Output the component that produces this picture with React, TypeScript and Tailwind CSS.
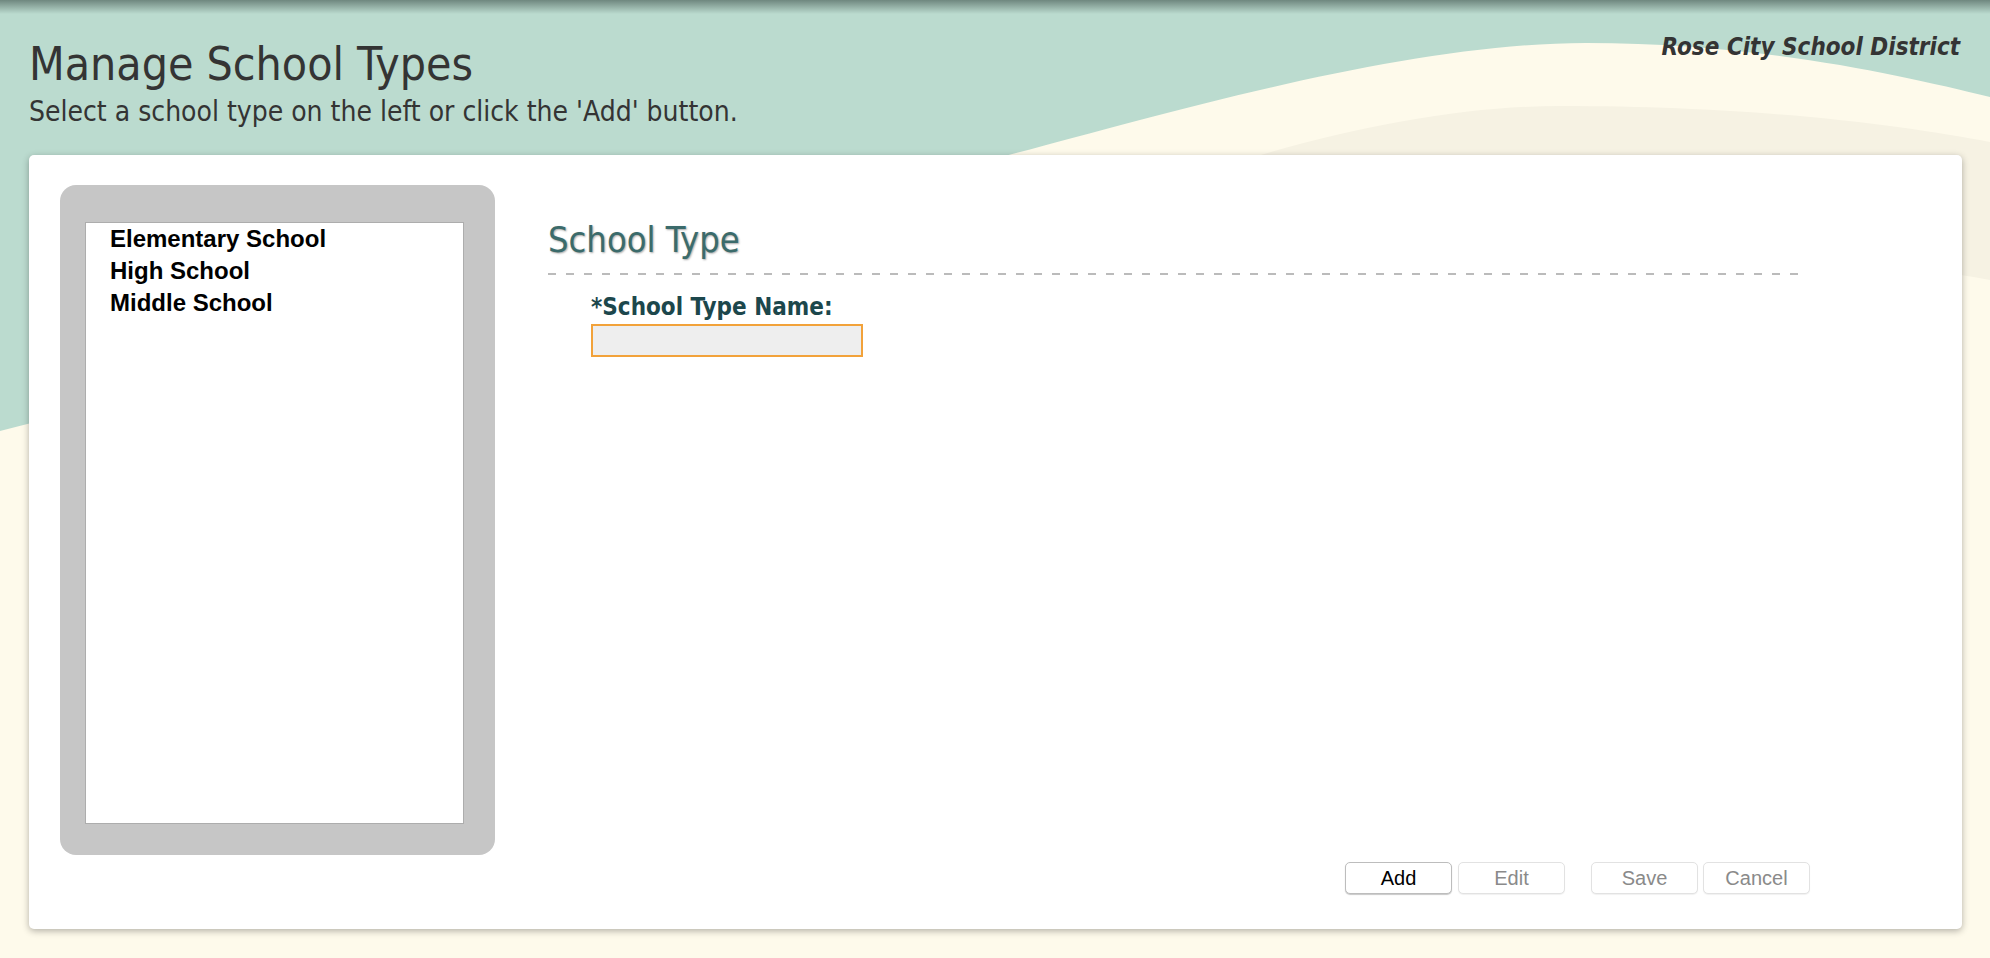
import React from "react";

const schoolTypes = ["Elementary School", "High School", "Middle School"];

const condensed = "font-['DejaVu_Sans_Condensed','DejaVu_Sans',sans-serif] [font-stretch:condensed]";

function Backdrop() {
  return (
    <div className="pointer-events-none absolute inset-0">
      <svg
        className="h-full w-full"
        viewBox="0 0 1990 958"
        preserveAspectRatio="none"
      >
        <rect x="0" y="0" width="1990" height="958" fill="#bbdbcf" />
        <path
          d="M0,431 C400,330 800,210 990,160 C1150,118 1400,43 1586,43 C1760,43 1900,75 1990,97 L1990,958 L0,958 Z"
          fill="#fefaeb"
        />
        <path
          d="M1000,260 C1180,165 1400,106 1560,106 C1760,106 1900,125 1990,142 L1990,280 C1800,240 1500,300 1200,420 Z"
          fill="#f6f2e3"
        />
      </svg>
      <div className="absolute inset-x-0 top-0 h-[14px] bg-gradient-to-b from-[rgba(70,90,84,0.65)] to-transparent" />
    </div>
  );
}

function ActionButton({ label, enabled }: { label: string; enabled?: boolean }) {
  return (
    <button
      type="button"
      disabled={!enabled}
      className={
        enabled
          ? "h-[32px] w-[107px] rounded-[5px] border border-[#bdbdbd] bg-white font-['Liberation_Sans',Arial,sans-serif] text-[20px] text-black shadow-[0_1px_1px_rgba(0,0,0,0.22)]"
          : "h-[32px] w-[107px] rounded-[5px] border border-[#e2e2e2] bg-white font-['Liberation_Sans',Arial,sans-serif] text-[20px] text-[#8a8a8a] shadow-[0_1px_1px_rgba(0,0,0,0.06)]"
      }
    >
      {label}
    </button>
  );
}

export default function App() {
  return (
    <div className="relative h-[958px] w-full overflow-hidden bg-[#fefaeb]">
      <Backdrop />

      <div className="relative">
        <header className="flex items-start justify-between pl-[29px] pr-[30px]">
          <div>
            <h1 className={`${condensed} pt-[38px] text-[46px] leading-[52px] font-normal text-[#343434]`}>
              Manage School Types
            </h1>
            <p className={`${condensed} mt-[7px] text-[28px] leading-[30px] text-[#343434]`}>
              Select a school type on the left or click the 'Add' button.
            </p>
          </div>
          <div className={`${condensed} pt-[33px] text-[24px] leading-[28px] font-bold italic text-[#343434]`}>
            Rose City School District
          </div>
        </header>

        <main className="ml-[29px] mr-[28px] mt-[28px] h-[774px] rounded-[5px] bg-white shadow-[0_2px_7px_rgba(0,0,0,0.3)]">
          <div className="grid grid-cols-[435px_1fr] gap-x-[53px] pl-[31px] pr-[157px] pt-[30px]">
            <div className="h-[670px] rounded-[16px] bg-[#c6c6c6] pb-[31px] pl-[25px] pr-[31px] pt-[37px]">
              <ul className="h-full border border-[#adadad] bg-white pl-[24px] font-['Liberation_Sans',Arial,sans-serif] text-[24px] leading-[32px] font-bold text-black">
                {schoolTypes.map((name) => (
                  <li key={name}>{name}</li>
                ))}
              </ul>
            </div>

            <section className="pt-[35px]">
              <h2 className={`${condensed} text-[36px] leading-[40px] text-[#3b6b6b] [text-shadow:1px_1px_2px_rgba(0,0,0,0.35)]`}>
                School Type
              </h2>
              <div className="mt-[13px] h-[2px] w-full bg-[repeating-linear-gradient(90deg,#bbbbbb_0px,#bbbbbb_8px,transparent_8px,transparent_18px)]" />
              <div className="ml-[43px]">
                <label className={`${condensed} mt-[18px] block text-[24px] leading-[28px] font-bold text-[#1c474c]`}>
                  *School Type Name:
                </label>
                <input
                  type="text"
                  className="mt-[3px] block h-[33px] w-[272px] border-2 border-[#f2a23a] bg-[#eeeeee] outline-none"
                />
              </div>
            </section>

            <div className="col-start-2 mt-[7px] -mr-[5px] flex justify-end">
              <div className="flex gap-[6px]">
                <ActionButton label="Add" enabled />
                <ActionButton label="Edit" />
              </div>
              <div className="ml-[26px] flex gap-[5px]">
                <ActionButton label="Save" />
                <ActionButton label="Cancel" />
              </div>
            </div>
          </div>
        </main>
      </div>
    </div>
  );
}
